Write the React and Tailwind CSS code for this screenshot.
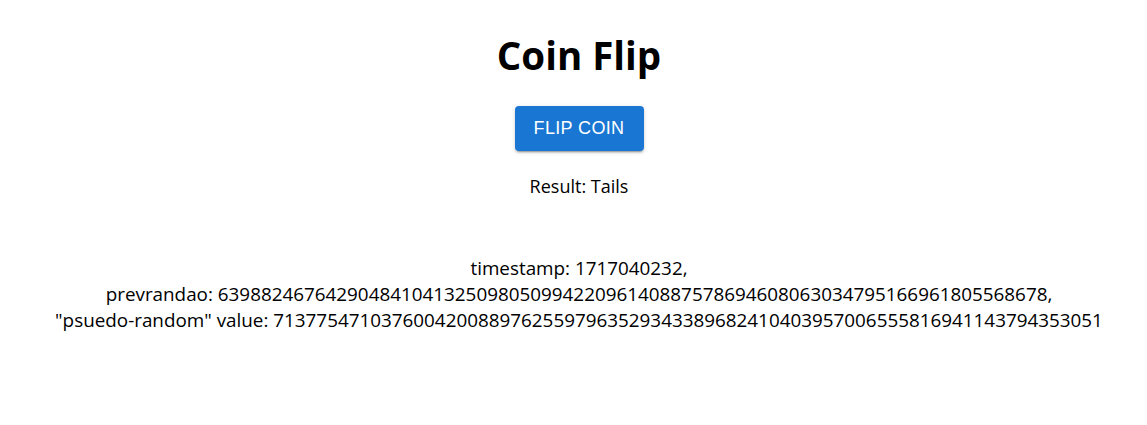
export default function App() {
  return (
    <div className="flex flex-col items-center bg-white text-black pl-[11px]">
      <div className="flex flex-col items-center w-full font-['Open_Sans',sans-serif]">
        <h1 className="mt-[27px] text-[38.5px] leading-[56px] font-bold">Coin Flip</h1>
        <button className="mt-[23px] h-[45px] w-[129px] rounded-[4px] bg-[#1976d2] text-white font-['Liberation_Sans',sans-serif] text-[18px] tracking-[0.02em] shadow-[0_3px_1px_-2px_rgba(0,0,0,0.2),0_2px_2px_0_rgba(0,0,0,0.14),0_1px_5px_0_rgba(0,0,0,0.12)]">
          FLIP COIN
        </button>
        <p className="mt-[22px] text-[18px] leading-[26px]">Result: Tails</p>
        <p className="mt-[56px] text-[18.85px] leading-[26px] text-center">
          timestamp: 1717040232,
          <br />
          prevrandao: 63988246764290484104132509805099422096140887578694608063034795166961805568678,
          <br />
          "psuedo-random" value: 71377547103760042008897625597963529343389682410403957006555816941143794353051
        </p>
      </div>
    </div>
  );
}
